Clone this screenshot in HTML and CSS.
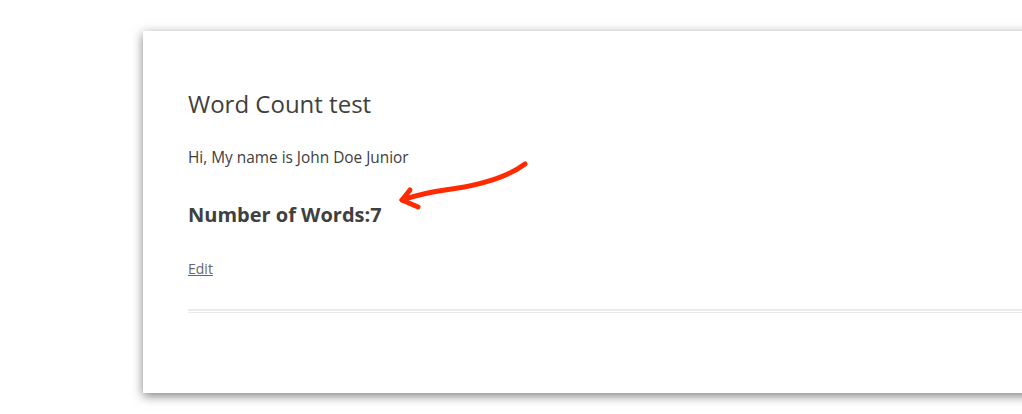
FILE: index.html
```html
<!DOCTYPE html>
<html>
<head>
<meta charset="utf-8">
<link rel="stylesheet" href="styles.css">
</head>
<body>
<div class="page">
  <article class="card">
    <h1 class="title">Word Count test</h1>
    <p class="text">Hi, My name is John Doe Junior</p>
    <h2 class="count">Number of Words:7</h2>
    <a class="edit" href="#">Edit</a>
    <hr class="sep">
  </article>
  <svg class="arrow" width="140" height="60" viewBox="0 0 140 60">
    <path d="M130 9 C 110 24, 80 31, 50 35 C 35 37, 22 40, 7 45" fill="none" stroke="#ff2a00" stroke-width="5" stroke-linecap="round"/>
    <path d="M15 35 L 7 45 L 23 52" fill="none" stroke="#ff2a00" stroke-width="5" stroke-linecap="round" stroke-linejoin="round"/>
  </svg>
</div>
</body>
</html>
```
FILE: styles.css
```css
html, body {
  margin: 0;
  padding: 0;
  background: #fff;
  overflow: hidden;
}
.page {
  position: relative;
  width: 1022px;
  height: 414px;
  padding: 31px 0 0 143px;
  box-sizing: border-box;
  font-family: "Open Sans", sans-serif;
  color: #404040;
}
.card {
  width: 920px;
  height: 362px;
  box-sizing: border-box;
  background: #fff;
  box-shadow: 0 3px 10px rgba(0, 0, 0, 0.5);
  padding: 58px 0 0 45px;
}
.title {
  margin: 0;
  font-size: 24px;
  font-weight: 400;
  line-height: 30px;
}
.text {
  margin: 28px 0 0;
  font-size: 15.4px;
  line-height: 22px;
}
.count {
  margin: 32px 0 0;
  font-size: 20px;
  font-weight: 700;
  line-height: 28px;
}
.edit {
  display: inline-block;
  margin-top: 31px;
  font-size: 14px;
  line-height: 18px;
  color: #666;
  text-decoration: underline;
}
.sep {
  margin: 30px 0 0;
  height: 1px;
  border: 0;
  border-top: 2px solid #ebebeb;
  border-bottom: 1px solid #ebebeb;
  background: #fff;
}
.arrow {
  position: absolute;
  left: 395px;
  top: 155px;
}
```
